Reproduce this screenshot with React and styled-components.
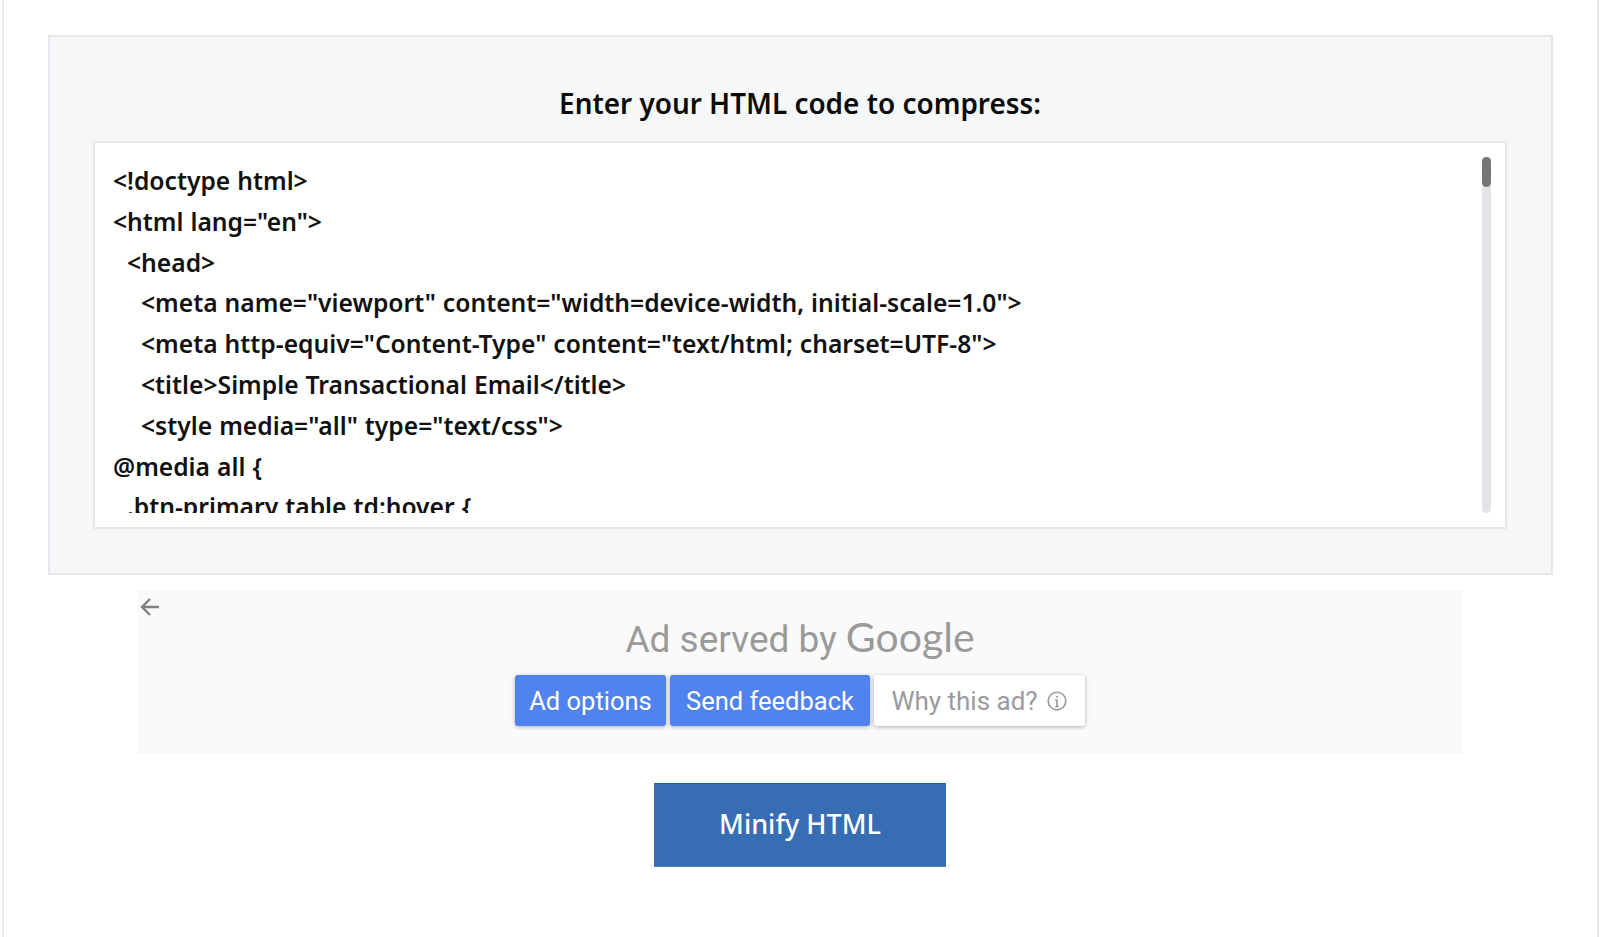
import React from "react"
import styled, { createGlobalStyle } from "styled-components"

const GlobalStyle = createGlobalStyle`
  html, body {
    margin: 0;
    padding: 0;
    background: #fff;
  }
`

const Page = styled.div`
  box-sizing: border-box;
  width: 1600px;
  height: 937px;
  overflow: hidden;
  margin: 0;
  padding: 0 1px 0 2px;
  font-family: "Noto Sans", Lato, sans-serif;
`

const Frame = styled.div`
  box-sizing: border-box;
  height: 100%;
  border: solid #e8eaf0;
  border-width: 0 2px;
  padding: 35px 45px 0 44px;
  display: flex;
  flex-direction: column;
  align-items: center;
`

const Panel = styled.section`
  box-sizing: border-box;
  align-self: flex-start;
  width: calc(100% + 1px);
  height: 540px;
  background: #f6f7f9;
  border: 2px solid #e5e7eb;
  padding: 46px 44px 0 43px;
`

const Heading = styled.h2`
  margin: 0 0 19px;
  height: 39px;
  line-height: 41px;
  text-align: center;
  font-size: 27.9px;
  font-weight: 600;
  color: #0b0b0b;
`

const CodeBox = styled.div`
  box-sizing: border-box;
  height: 388px;
  background: #fff;
  border: 2px solid #e5e7eb;
  padding: 14px 14px 14px 18px;
  display: flex;
  gap: 16px;
`

const Code = styled.pre`
  flex: 1;
  margin: 0;
  padding-top: 4px;
  overflow: hidden;
  font-family: inherit;
  font-size: 24.65px;
  font-weight: 600;
  word-spacing: 0.6px;
  line-height: 40.8px;
  color: #111;
`

const Track = styled.div`
  flex: none;
  width: 9px;
  border-radius: 5px;
  background: #e2e4e9;
`

const Thumb = styled.div`
  height: 30px;
  border-radius: 5px;
  background: #757575;
`

const AdBox = styled.div`
  width: 1326px;
  height: 164px;
  margin-top: 15px;
  background: #fafafa;
  font-family: Roboto, sans-serif;
  display: flex;
  flex-direction: column;
`

const BackIcon = styled.svg`
  width: 24px;
  height: 24px;
  margin: 5px 0 0 1px;
  flex: none;
  color: #808080;
`

const AdTitle = styled.div`
  margin-top: -5px;
  height: 46px;
  line-height: 46px;
  text-align: center;
  font-size: 37px;
  color: #9a9a9a;
`

const GoogleWord = styled.span`
  font-family: Lato, sans-serif;
  font-size: 41px;
`

const AdActions = styled.div`
  margin-top: 15px;
  display: flex;
  justify-content: center;
  gap: 4px;
`

const AdButton = styled.button`
  box-sizing: border-box;
  height: 51px;
  width: ${(p) => p.$width}px;
  padding: 0;
  border: 0;
  border-radius: 3px;
  background: ${(p) => (p.$plain ? "#fff" : "#5083ee")};
  color: ${(p) => (p.$plain ? "#9a9aa0" : "#fff")};
  box-shadow: 0 1px 4px rgba(0, 0, 0, 0.3);
  font-family: inherit;
  font-size: ${(p) => (p.$plain ? 26 : 25.5)}px;
  display: flex;
  align-items: center;
  justify-content: center;
  gap: 8px;
`

const InfoIcon = styled.svg`
  width: 22px;
  height: 22px;
  color: #9a9aa0;
`

const MinifyButton = styled.button`
  box-sizing: border-box;
  width: 292px;
  height: 84px;
  margin-top: 29px;
  padding: 0 0 3px;
  border: 0;
  border-top: 1px solid #1f5ea8;
  border-bottom: 1px solid #5583c0;
  background: #376db3;
  color: #fff;
  font-family: inherit;
  font-size: 27px;
  font-weight: 500;
`

const codeLines = `<!doctype html>
<html lang="en">
  <head>
    <meta name="viewport" content="width=device-width, initial-scale=1.0">
    <meta http-equiv="Content-Type" content="text/html; charset=UTF-8">
    <title>Simple Transactional Email</title>
    <style media="all" type="text/css">
@media all {
  .btn-primary table td:hover {`

const App = () => (
  <Page>
    <GlobalStyle />
    <Frame>
      <Panel>
        <Heading>Enter your HTML code to compress:</Heading>
        <CodeBox>
          <Code>{codeLines}</Code>
          <Track>
            <Thumb />
          </Track>
        </CodeBox>
      </Panel>
      <AdBox>
        <BackIcon viewBox="0 0 24 24" fill="none" stroke="currentColor" strokeWidth="2.4">
          <path d="M21 12H4M12 4l-8 8 8 8" />
        </BackIcon>
        <AdTitle>
          Ad served by <GoogleWord>Google</GoogleWord>
        </AdTitle>
        <AdActions>
          <AdButton $width={151}>Ad options</AdButton>
          <AdButton $width={200}>Send feedback</AdButton>
          <AdButton $width={211} $plain>
            Why this ad?
            <InfoIcon viewBox="0 0 20 20" fill="none" stroke="currentColor" strokeWidth="1.5">
              <circle cx="10" cy="10" r="8" />
              <path d="M10 9v6M8.5 9H10M8.5 15h3M10 5.5v1.5" />
            </InfoIcon>
          </AdButton>
        </AdActions>
      </AdBox>
      <MinifyButton>Minify HTML</MinifyButton>
    </Frame>
  </Page>
)

export default App
